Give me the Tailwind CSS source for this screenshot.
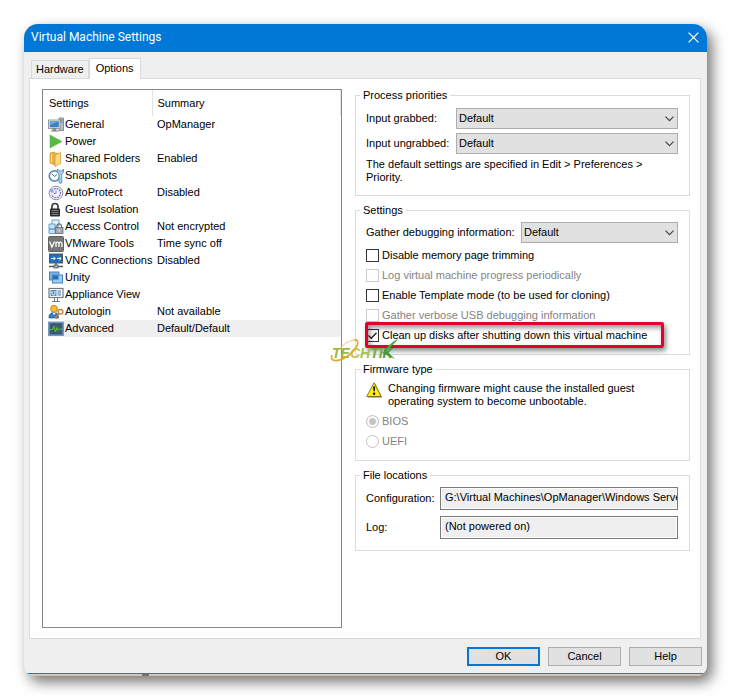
<!DOCTYPE html>
<html lang="en">
<head>
<meta charset="utf-8">
<meta name="viewport" content="width=device-width, initial-scale=1">
<title>Virtual Machine Settings</title>
<script src="https://cdn.jsdelivr.net/npm/@tailwindcss/browser@4"></script>
</head>
<body class="bg-white font-['Liberation_Sans',Arial,sans-serif] text-[11px] leading-[13px] text-black">
<div class="flex min-h-screen p-6">
<main class="flex flex-1 flex-col overflow-hidden rounded-t-[14px] rounded-b-[10px] bg-[#efefef] shadow-[5px_6px_14px_rgba(0,0,0,0.55)]">

  <!-- Title bar -->
  <header class="flex h-7 items-center justify-between bg-[#0078d7] pr-2 pb-[2px] pl-[7px] text-white">
    <h1 class="font-[Roboto,sans-serif] text-[12px] leading-4">Virtual Machine Settings</h1>
    <button type="button" aria-label="Close" class="flex h-4 w-[11px] items-center">
      <svg class="h-[11px] w-[11px]" viewBox="0 0 11 11" fill="none" stroke="currentColor" stroke-width="1.2"><path d="M.6.6l9.8 9.8M10.4.6L.6 10.4"/></svg>
    </button>
  </header>

  <!-- Tabs -->
  <div role="tablist" class="flex h-[26px] items-end pl-[7px]">
    <button role="tab" type="button" class="h-[18px] border border-b-0 border-[#d9d9d9] px-1">Hardware</button>
    <button role="tab" type="button" aria-selected="true" class="relative z-10 -mb-px h-[21px] border border-b-0 border-[#d9d9d9] bg-white px-[6px] pb-[2px]">Options</button>
  </div>

  <!-- Options page -->
  <section class="mr-[6px] ml-[5px] flex flex-1 items-stretch gap-[13px] border border-[#d9d9d9] bg-white py-[10px] pr-[10px] pl-3">

    <div class="w-[300px] border border-[#828790]">
      <table class="w-full table-fixed border-collapse text-left">
        <colgroup><col class="w-[21px]"><col class="w-[88px]"><col></colgroup>
        <thead>
          <tr class="h-[26px]">
            <th colspan="2" class="border-r border-[#e2e2e2] pl-[6px] font-normal">Settings</th>
            <th class="border-r border-[#e2e2e2] pl-[5px] font-normal">Summary</th>
          </tr>
        </thead>
        <tbody>
          <tr class="h-[17px]">
            <td class="pl-[5px]"><svg class="block h-4 w-4" viewBox="0 0 16 16"><path d="M11 1h4.500v12.500H11z" fill="#b9bdc1" stroke="#777b80" stroke-width=".8"/><path d="M12 3h2.500M12 5h2.500" stroke="#5d6165" stroke-width=".8"/><rect x=".5" y="3" width="11.500" height="8.500" fill="#e6eaee" stroke="#8f969d" stroke-width=".9"/><rect x="1.800" y="4.300" width="9" height="6" fill="#3c7fbf"/><path d="M1.800 4.300h9l-9 4z" fill="#70a8d8"/><path d="M5 11.500h3v2H5zM3 14h8" stroke="#7d8388" fill="#a7acb1"/></svg></td>
            <td class="pl-px whitespace-nowrap">General</td><td class="pl-[5px]">OpManager</td>
          </tr>
          <tr class="h-[17px]">
            <td class="pl-[5px]"><svg class="block h-4 w-4" viewBox="0 0 16 16"><path d="M2 1l12 6.500L2 14z" fill="#5cb947" stroke="#55b03f" stroke-width=".5"/></svg></td>
            <td class="pl-px whitespace-nowrap">Power</td><td></td>
          </tr>
          <tr class="h-[17px]">
            <td class="pl-[5px]"><svg class="block h-4 w-4" viewBox="0 0 16 16"><path d="M2 2l5-1v2l3-1v10l-3 2-5-2z" fill="#eab13d" stroke="#c28a20" stroke-width=".6"/><path d="M7 4l5.500-2.500v11L7 15.500z" fill="#fbdc83" stroke="#d09a2c" stroke-width=".7"/><path d="M3.500 3v8.500" stroke="#fff0bd"/></svg></td>
            <td class="pl-px whitespace-nowrap">Shared Folders</td><td class="pl-[5px]">Enabled</td>
          </tr>
          <tr class="h-[17px]">
            <td class="pl-[5px]"><svg class="block h-4 w-4" viewBox="0 0 16 16" fill="none"><circle cx="6.500" cy="8" r="5.200" fill="#fff" stroke="#5d93b7" stroke-width="1.800"/><path d="M4 6l2.500 2.500L9 6.500" stroke="#486b84"/><path d="M9.500 1v3.500L11 6v8a1.300 1.300 0 0 0 2.800 0V6l1.700-1.500V1l-1.500 2h-2.500z" fill="#a9d2ee" stroke="#4f87ad" stroke-width=".8"/></svg></td>
            <td class="pl-px whitespace-nowrap">Snapshots</td><td></td>
          </tr>
          <tr class="h-[17px]">
            <td class="pl-[5px]"><svg class="block h-4 w-4" viewBox="0 0 16 16" fill="none"><circle cx="8" cy="8" r="6.800" fill="#f3f3f6" stroke="#8d8d96"/><path d="M4 6a4.500 4.500 0 1 1-.3 3.500" stroke="#7775d8" stroke-width="1.200" stroke-dasharray="2 .6"/><path d="M3 4v3h3M8 5.500V8.500H6" stroke="#7775d8" stroke-width=".9"/></svg></td>
            <td class="pl-px whitespace-nowrap">AutoProtect</td><td class="pl-[5px]">Disabled</td>
          </tr>
          <tr class="h-[17px]">
            <td class="pl-[5px]"><svg class="block h-4 w-4" viewBox="0 0 16 16" fill="none"><path d="M4 8V4.500a3 3 0 0 1 6 0V8" stroke="#3c3c3c" stroke-width="1.700"/><rect x="2" y="6.500" width="10" height="8" rx="1" fill="#292929"/><path d="M3.500 8.500h7M3.500 10.500h7M3.500 12.500h7" stroke="#9a9a9a" stroke-width=".8"/></svg></td>
            <td class="pl-px whitespace-nowrap">Guest Isolation</td><td></td>
          </tr>
          <tr class="h-[17px]">
            <td class="pl-[5px]"><svg class="block h-4 w-4" viewBox="0 0 16 16" fill="none"><path d="M4 1h7v6H4z" fill="#e5f2fb" stroke="#62a0ce"/><path d="M1 5h6v5H1zM1 10h6v4.500H1z" fill="#c7e2f5" stroke="#5b9bcb" stroke-width=".9"/><path d="M9 9V7a2.200 2.200 0 0 1 4.400 0v2" stroke="#6f747a" stroke-width="1.200"/><rect x="7.500" y="8.500" width="7.500" height="6" fill="#a3a8ae" stroke="#666b70" stroke-width=".8"/><path d="M11.200 10.500v2" stroke="#fff"/></svg></td>
            <td class="pl-px whitespace-nowrap">Access Control</td><td class="pl-[5px]">Not encrypted</td>
          </tr>
          <tr class="h-[17px]">
            <td class="pl-[5px]"><svg class="block h-4 w-4" viewBox="0 0 16 16" fill="none"><rect x=".5" y=".5" width="15" height="15" rx="1" fill="#767676" stroke="#606060"/><path d="M1.500 5.500L4 11l2.500-5.500M8 11V5.800M8 8c0-2.500 3-2.500 3 0v3M11 8c0-2.500 3-2.500 3 0v3" stroke="#fff" stroke-width="1.300"/></svg></td>
            <td class="pl-px whitespace-nowrap">VMware Tools</td><td class="pl-[5px]">Time sync off</td>
          </tr>
          <tr class="h-[17px]">
            <td class="pl-[5px]"><svg class="block h-4 w-4" viewBox="0 0 16 16" fill="none"><rect x="1.500" y="1" width="13" height="9" fill="#1e6fb9" stroke="#55595e"/><path d="M3 5.500h4M9 5.500h4M5.500 3.800l1.700 1.700-1.700 1.700M11.300 3.800L13 5.500l-1.700 1.700" stroke="#fff" stroke-width=".9"/><path d="M8 10v3M1 13.500h14" stroke="#53575c" stroke-width="1.300"/><rect x="6" y="12" width="4" height="3" fill="#a9adb1" stroke="#53575c" stroke-width=".8"/></svg></td>
            <td class="pl-px whitespace-nowrap">VNC Connections</td><td class="pl-[5px]">Disabled</td>
          </tr>
          <tr class="h-[17px]">
            <td class="pl-[5px]"><svg class="block h-4 w-4" viewBox="0 0 16 16"><rect x="1.500" y="2" width="9.500" height="8" fill="#79b5e4" stroke="#4486bd"/><rect x="4.500" y="5" width="10" height="8" fill="#9acbf0" stroke="#4486bd"/><rect x="5" y="5.500" width="5.500" height="4" fill="#2a6eae"/></svg></td>
            <td class="pl-px whitespace-nowrap">Unity</td><td></td>
          </tr>
          <tr class="h-[17px]">
            <td class="pl-[5px]"><svg class="block h-4 w-4" viewBox="0 0 16 16" fill="none"><rect x="1" y="1.500" width="14" height="9" fill="#fff" stroke="#74797f" stroke-width="1.200"/><rect x="2.500" y="3" width="6" height="6" fill="#4e8fca"/><path d="M4 4v2.500a1.500 1.500 0 0 0 3 0V4" stroke="#fff" stroke-width=".9"/><path d="M9.500 4H13M9.500 6H13M9.500 8H13" stroke="#3570a6"/><path d="M6.500 10.500V14M9.500 10.500V14M4 14.500h8" stroke="#74797f"/></svg></td>
            <td class="pl-px whitespace-nowrap">Appliance View</td><td></td>
          </tr>
          <tr class="h-[17px]">
            <td class="pl-[5px]"><svg class="block h-4 w-4" viewBox="0 0 16 16"><path d="M1 14c-.5-4 2-5.500 5-5.500S10.500 10 10.500 14z" fill="#337fc2" stroke="#20609a" stroke-width=".7"/><path d="M4.500 8.500L6 11l2-2.500z" fill="#fff"/><circle cx="6" cy="4.800" r="3.500" fill="#f5ba32" stroke="#b97d14" stroke-width=".8"/><circle cx="12.500" cy="7.800" r="2.400" fill="#fff4dd" stroke="#bd7d3a" stroke-width="1.300"/><path d="M11 9.500L7.500 13.500l1.500 1" fill="none" stroke="#bd7d3a" stroke-width="1.300"/></svg></td>
            <td class="pl-px whitespace-nowrap">Autologin</td><td class="pl-[5px]">Not available</td>
          </tr>
          <tr class="h-[17px]">
            <td class="pl-[5px]"><svg class="block h-4 w-4" viewBox="0 0 16 16" fill="none"><rect x=".8" y="1.300" width="14.400" height="13" fill="#3f5a70" stroke="#6f9cc4" stroke-width="1.600"/><path d="M2 8.500h2.500L6 5.500l1.500 5.500L9 6.500l1.200 3L11.500 8H14" stroke="#4ecb35"/></svg></td>
            <td class="bg-[#efefef] pl-px whitespace-nowrap">Advanced</td><td class="bg-[#efefef] pl-[5px]">Default/Default</td>
          </tr>
        </tbody>
      </table>
    </div>

    <div class="flex min-w-0 flex-1 flex-col gap-2">
      <fieldset class="border border-[#dcdcdc] pr-[11px] pb-[11px] pl-[10px]">
        <legend class="-ml-[6px] px-[3px] leading-[13px]">Process priorities</legend>
        <div class="grid grid-cols-[90px_minmax(0,1fr)] items-center gap-y-1 pt-[6px]">
          <label for="grabbed">Input grabbed:</label>
          <div class="relative">
            <select id="grabbed" class="block h-[21px] w-full appearance-none border border-[#adadad] bg-[#e1e1e1] pl-[2px] leading-[13px]"><option>Default</option></select>
            <svg class="pointer-events-none absolute top-2 right-1 h-[6px] w-[9px]" viewBox="0 0 9 6" fill="none" stroke="#444" stroke-width="1.200"><path d="M.5.700l4 4 4-4"/></svg>
          </div>
          <label for="ungrabbed">Input ungrabbed:</label>
          <div class="relative">
            <select id="ungrabbed" class="block h-[21px] w-full appearance-none border border-[#adadad] bg-[#e1e1e1] pl-[2px] leading-[13px]"><option>Default</option></select>
            <svg class="pointer-events-none absolute top-2 right-1 h-[6px] w-[9px]" viewBox="0 0 9 6" fill="none" stroke="#444" stroke-width="1.200"><path d="M.5.700l4 4 4-4"/></svg>
          </div>
        </div>
        <p class="pt-1">The default settings are specified in Edit &gt; Preferences &gt;<br>Priority.</p>
      </fieldset>

      <fieldset class="border border-[#dcdcdc] pr-[11px] pb-[9px] pl-[10px]">
        <legend class="-ml-[6px] px-[3px] leading-[13px]">Settings</legend>
        <div class="grid grid-cols-[155px_minmax(0,1fr)] items-center pt-[5px] pb-[2px]">
          <label for="debug" class="whitespace-nowrap">Gather debugging information:</label>
          <div class="relative">
            <select id="debug" class="block h-[21px] w-full appearance-none border border-[#adadad] bg-[#e1e1e1] pl-[2px] leading-[13px]"><option>Default</option></select>
            <svg class="pointer-events-none absolute top-2 right-1 h-[6px] w-[9px]" viewBox="0 0 9 6" fill="none" stroke="#444" stroke-width="1.200"><path d="M.5.700l4 4 4-4"/></svg>
          </div>
        </div>
        <label class="flex h-5 items-center gap-[3px]"><input type="checkbox" class="h-[13px] w-[13px] appearance-none border border-[#333] bg-white">Disable memory page trimming</label>
        <label class="flex h-5 items-center gap-[3px] text-[#838383]"><input type="checkbox" disabled class="h-[13px] w-[13px] appearance-none border border-[#ccc] bg-white">Log virtual machine progress periodically</label>
        <label class="flex h-5 items-center gap-[3px]"><input type="checkbox" class="h-[13px] w-[13px] appearance-none border border-[#333] bg-white">Enable Template mode (to be used for cloning)</label>
        <label class="flex h-5 items-center gap-[3px] text-[#838383]"><input type="checkbox" disabled class="h-[13px] w-[13px] appearance-none border border-[#ccc] bg-white">Gather verbose USB debugging information</label>
        <div class="relative">
          <label class="flex h-5 items-center gap-[3px]">
            <span class="grid">
              <input type="checkbox" checked class="col-start-1 row-start-1 h-[13px] w-[13px] appearance-none border border-[#333] bg-white">
              <svg class="pointer-events-none col-start-1 row-start-1 h-[13px] w-[13px]" viewBox="0 0 13 13" fill="none" stroke="#222" stroke-width="1.300"><path d="M2.500 6.500l2.800 2.800 5.200-5.500"/></svg>
            </span>Clean up disks after shutting down this virtual machine</label>
          <!-- Highlight and watermark over the option -->
          <div class="pointer-events-none absolute -top-[3px] -left-px h-[26px] w-[299px] rounded-[2px] border-3 border-[#e4002b] shadow-[2px_3px_5px_rgba(0,0,0,0.45),inset_2px_3px_5px_rgba(0,0,0,0.4)]"></div>
          <svg class="pointer-events-none absolute top-3 -left-[36px] h-[26px] w-[72px]" viewBox="0 0 72 26">
            <path d="M54 14Q60 6 69 1Q62 9 57 14L65 22L52 16z" fill="#55a344"/>
            <text x="2" y="21" font-family="'Liberation Sans',Arial,sans-serif" font-size="14" font-weight="bold" font-style="italic"><tspan fill="#9cb83f">TE</tspan><tspan fill="#c3c84a">C</tspan><tspan fill="#a5c650">H</tspan><tspan fill="#73ac3d">TI</tspan><tspan fill="#4c993c">K</tspan></text>
            <path d="M2 18C-1 26 10 25 19 18S31 2 24 3" fill="none" stroke="#e2a92c" stroke-width="1.600"/>
            <path d="M24 3Q14 5 9 13" fill="none" stroke="#f0c860"/>
          </svg>
        </div>
      </fieldset>

      <fieldset class="border border-[#dcdcdc] pr-[11px] pb-[9px] pl-[10px]">
        <legend class="-ml-[6px] px-[3px] leading-[13px]">Firmware type</legend>
        <div class="flex gap-[6px] pt-[6px] pb-[3px]">
          <svg class="h-4 w-4 shrink-0" viewBox="0 0 16 16"><path d="M9 1.500L16 15.500H2z" fill="#777"/><path d="M8 .700L15.300 14.500H.700z" fill="#ffec14" stroke="#6b6200" stroke-width=".8"/><path d="M7 4.500h2.200l-.5 4.800H7.500z" fill="#111"/><circle cx="8.100" cy="11.800" r="1.200" fill="#111"/></svg>
          <p>Changing firmware might cause the installed guest<br>operating system to become unbootable.</p>
        </div>
        <label class="flex h-5 items-center gap-[3px] text-[#838383]"><input type="radio" name="firmware" checked disabled class="h-[13px] w-[13px] appearance-none rounded-full border border-[#c4c4c4] bg-[#c4c4c4] shadow-[inset_0_0_0_2px_white]">BIOS</label>
        <label class="flex h-5 items-center gap-[3px] text-[#838383]"><input type="radio" name="firmware" disabled class="h-[13px] w-[13px] appearance-none rounded-full border border-[#c4c4c4] bg-white">UEFI</label>
      </fieldset>

      <fieldset class="border border-[#dcdcdc] pr-[11px] pb-[11px] pl-[10px]">
        <legend class="-ml-[6px] px-[3px] leading-[13px]">File locations</legend>
        <div class="grid grid-cols-[74px_minmax(0,1fr)] items-center gap-y-[6px] pt-[5px]">
          <label for="config">Configuration:</label>
          <input id="config" readonly value="G:\Virtual Machines\OpManager\Windows Serve" class="h-[23px] w-full border border-[#7a7a7a] bg-[#efefef] pb-[3px] pl-1 shadow-[inset_0_0_0_1px_white]">
          <label for="log">Log:</label>
          <input id="log" readonly value="(Not powered on)" class="h-[23px] w-full border border-[#7a7a7a] bg-[#efefef] pb-[3px] pl-1 shadow-[inset_0_0_0_1px_white]">
        </div>
      </fieldset>
    </div>
  </section>

  <!-- Dialog buttons -->
  <footer class="flex justify-end gap-2 px-[5px] pt-2 pb-[7px]">
    <button type="button" class="h-[19px] w-[73px] border-2 border-[#0078d7] bg-[#e1e1e1] leading-[13px]">OK</button>
    <button type="button" class="h-[19px] w-[73px] border border-[#adadad] bg-[#e1e1e1] leading-[13px]">Cancel</button>
    <button type="button" class="h-[19px] w-[73px] border border-[#adadad] bg-[#e1e1e1] leading-[13px]">Help</button>
  </footer>
  <div class="h-[3px] border-t border-[#1a7fd0] bg-[#c4c8c8] pl-[118px]"><div class="h-[2px] w-[7px] bg-[#70757c]"></div></div>
</main>
</div>
</body>
</html>
